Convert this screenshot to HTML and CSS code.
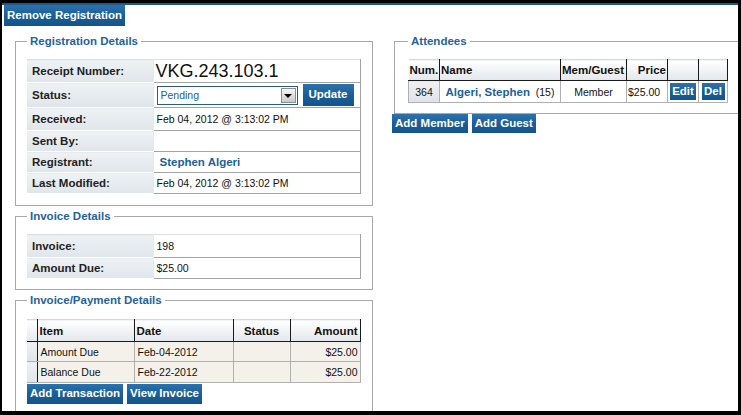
FILE: index.html
```html
<!DOCTYPE html>
<html lang="en">
<head>
<meta charset="utf-8">
<title>Registration</title>
<link rel="stylesheet" href="styles.css">
</head>
<body>
<div class="frame">
  <div class="topbar"><button class="btn btn-remove" type="button">Remove Registration</button></div>
  <div class="columns">
    <div class="col-left">
      <fieldset class="box box-reg">
        <legend>Registration Details</legend>
        <table class="details">
          <colgroup><col class="c-label"><col class="c-value"></colgroup>
          <tr class="r-receipt"><td class="lbl">Receipt Number:</td><td class="val receipt">VKG.243.103.1</td></tr>
          <tr class="r-status"><td class="lbl">Status:</td><td class="val status-cell"><div class="status-row"><div class="select"><span class="select-text">Pending</span><span class="select-arrow"><span class="tri"></span></span></div><button class="btn btn-update" type="button">Update</button></div></td></tr>
          <tr class="r-received"><td class="lbl">Received:</td><td class="val">Feb 04, 2012 @ 3:13:02 PM</td></tr>
          <tr><td class="lbl">Sent By:</td><td class="val"></td></tr>
          <tr><td class="lbl">Registrant:</td><td class="val"><a class="link reg-link" href="#">Stephen Algeri</a></td></tr>
          <tr><td class="lbl">Last Modified:</td><td class="val">Feb 04, 2012 @ 3:13:02 PM</td></tr>
        </table>
      </fieldset>
      <fieldset class="box box-inv">
        <legend>Invoice Details</legend>
        <table class="details">
          <colgroup><col class="c-label"><col class="c-value"></colgroup>
          <tr class="r-invoice"><td class="lbl">Invoice:</td><td class="val">198</td></tr>
          <tr><td class="lbl">Amount Due:</td><td class="val">$25.00</td></tr>
        </table>
      </fieldset>
      <fieldset class="box box-pay">
        <legend>Invoice/Payment Details</legend>
        <table class="grid pay">
          <colgroup><col class="p-sel"><col class="p-item"><col class="p-date"><col class="p-status"><col class="p-amount"></colgroup>
          <tr><th class="first"></th><th>Item</th><th>Date</th><th class="center">Status</th><th class="right last">Amount</th></tr>
          <tr class="pr1"><td class="first"></td><td>Amount Due</td><td>Feb-04-2012</td><td></td><td class="right">$25.00</td></tr>
          <tr class="pr2"><td class="first"></td><td>Balance Due</td><td>Feb-22-2012</td><td></td><td class="right">$25.00</td></tr>
        </table>
        <div class="actions pay-actions">
          <button class="btn btn-sm" type="button">Add Transaction</button>
          <button class="btn btn-sm" type="button">View Invoice</button>
        </div>
      </fieldset>
    </div>
    <div class="col-right">
      <fieldset class="box box-att">
        <legend>Attendees</legend>
        <table class="grid att">
          <colgroup><col class="a-num"><col class="a-name"><col class="a-mem"><col class="a-price"><col class="a-edit"><col class="a-del"></colgroup>
          <tr><th class="first">Num.</th><th>Name</th><th>Mem/Guest</th><th class="right">Price</th><th></th><th class="last"></th></tr>
          <tr><td class="num">364</td><td class="center"><a class="link" href="#">Algeri, Stephen</a>&nbsp; (15)</td><td class="center">Member</td><td class="price">$25.00</td><td class="btn-cell"><button class="btn btn-row btn-edit" type="button">Edit</button></td><td class="btn-cell"><button class="btn btn-row btn-del" type="button">Del</button></td></tr>
        </table>
      </fieldset>
      <div class="actions att-actions">
        <button class="btn btn-sm" type="button">Add Member</button>
        <button class="btn btn-sm" type="button">Add Guest</button>
      </div>
    </div>
  </div>
</div>
</body>
</html>
```

FILE: styles.css
```css
* { box-sizing: border-box; }
html, body { margin: 0; padding: 0; }
body {
  background: #000;
  width: 741px;
  height: 415px;
  overflow: hidden;
  font-family: "Liberation Sans", Arial, sans-serif;
  color: #111;
}
.frame {
  margin: 3px 3px 0 2px;
  height: 408px;
  background: #fff;
  border-top: 2px solid #1a5a8e;
  overflow: hidden;
}
.btn {
  display: inline-flex;
  align-items: center;
  justify-content: center;
  white-space: nowrap;
  border: 0;
  margin: 0;
  padding: 0 3px;
  background: linear-gradient(#2d72ac, #1a5d96 55%, #14548a);
  color: #fff;
  font: bold 11.5px/1 "Liberation Sans", Arial, sans-serif;
  cursor: pointer;
}
.topbar { height: 21px; }
.btn-remove { margin-left: 2px; height: 21px; padding: 0 3px; }
.columns { display: flex; align-items: flex-start; margin-top: 8px; }
.col-left {
  margin-left: 13px;
  width: 358px;
  flex-shrink: 0;
  display: flex;
  flex-direction: column;
  gap: 3px;
}
.col-right { margin-left: 19px; width: 380px; flex-shrink: 0; }
fieldset.box {
  margin: 0;
  min-width: 0;
  border: 1px solid #a8a8a8;
  padding: 11px 12px 10px 11px;
}
fieldset.box legend {
  padding: 0 3px;
  margin-left: 0;
  font: bold 11.5px/14px "Liberation Sans", Arial, sans-serif;
  color: #1f62a3;
}
fieldset.box-reg { padding-bottom: 11px; }
fieldset.box-pay { padding-top: 12px; padding-bottom: 7px; }
fieldset.box-att { margin-left: 2px; padding: 11px 12px 10px 13px; }

/* Key/value tables */
table.details {
  width: 333px;
  border-collapse: collapse;
  table-layout: fixed;
  border-top: 1px solid #dedede;
}
.c-label { width: 126px; }
.c-value { width: 207px; }
.details td { height: 21px; padding: 0 3px; font-size: 10.5px; vertical-align: middle; }
.details .lbl {
  padding-left: 5px;
  font-weight: bold;
  font-size: 11.5px;
  color: #222;
  background: linear-gradient(#eef2f5, #dfe5ea);
  border-bottom: 1px solid #fff;
}
.details .val {
  background: #fff;
  border-left: 1px solid #e8e8e8;
  border-right: 1px solid #a3a3a3;
  border-bottom: 1px solid #a3a3a3;
}
.r-receipt td { height: 23px; }
.r-status td { height: 25px; }
.r-received td { height: 23px; }
.r-invoice td { height: 23px; }
.details .receipt { font-size: 18px; line-height: 20px; padding-left: 2px; }
.details .status-cell { padding-left: 3px; }
.status-row { display: flex; align-items: center; }
.select {
  width: 141px;
  height: 19px;
  border: 1px solid #2a5a86;
  display: flex;
  align-items: center;
  justify-content: space-between;
  background: #fff;
  padding: 0 1px 0 3px;
}
.select-text { color: #2060a0; font-size: 10.5px; }
.select-arrow {
  width: 15px;
  height: 15px;
  border: 1px solid #8e8e8e;
  background: linear-gradient(#f6f6f6, #c9c9c9);
  display: flex;
  align-items: center;
  justify-content: center;
}
.tri {
  width: 0;
  height: 0;
  border-left: 4px solid transparent;
  border-right: 4px solid transparent;
  border-top: 4px solid #000;
  margin-top: 2px;
}
.btn-update { margin-left: 5px; width: 51px; height: 22px; }
.link { color: #1c5f9c; font-weight: bold; font-size: 11.5px; text-decoration: none; }
.reg-link { margin-left: 3px; }

/* Grid tables */
table.grid { border-collapse: collapse; table-layout: fixed; border-top: 1px solid #d8d8d8; }
.grid th {
  height: 21px;
  padding: 0 2px;
  text-align: left;
  font-size: 11.5px;
  font-weight: bold;
  color: #111;
  background: linear-gradient(#ffffff, #e3e8ec);
  border-left: 1px solid #1a1a1a;
  border-bottom: 1px solid #1a1a1a;
}
.grid th.first { border-left: 0; }
.grid th.last { border-right: 1px solid #1a1a1a; }
.grid td {
  height: 20px;
  padding: 0 3px;
  font-size: 10.5px;
  border: 1px solid #b0b0b0;
}
.grid .center { text-align: center; }
.grid .right { text-align: right; }

.pay { width: 333px; }
.p-sel { width: 10px; }
.p-item { width: 97px; }
.p-date { width: 99px; }
.p-status { width: 57px; }
.p-amount { width: 70px; }
.pay th { height: 22px; }
.pay th.right { padding-right: 2px; }
.pay td { background: #f4f1ea; }
.pay td.right { padding-right: 2px; }
.pay td.first {
  background: linear-gradient(#eef1f4, #dfe4e9);
  border-left: 0;
  border-right: 1px solid #1a1a1a;
}
.pay .pr2 td.first { border-top: 1px solid #1a1a1a; }
.pay .pr2 td { height: 21px; }

.att { width: 319px; }
.a-num { width: 31px; }
.a-name { width: 121px; }
.a-mem { width: 66px; }
.a-price { width: 41px; }
.a-edit { width: 31px; }
.a-del { width: 29px; }
.att th { padding: 0 1px; }
.att th.right { padding-right: 1px; }
.att td { background: #fff; padding: 0 1px; }
.att td.num { text-align: center; background: linear-gradient(#eef1f4, #dde3e8); }
.att td.price { padding-left: 1px; }
.att td.btn-cell { padding: 2px 2px; text-align: center; }
.btn-row { height: 17px; padding: 0 2px; }
.btn-edit { width: 26px; }
.btn-del { width: 23px; }

.actions { display: flex; gap: 4px; }
.pay-actions { margin-top: 1px; }
.btn-sm { height: 20px; }
.att-actions .btn-sm { height: 19px; }
```
